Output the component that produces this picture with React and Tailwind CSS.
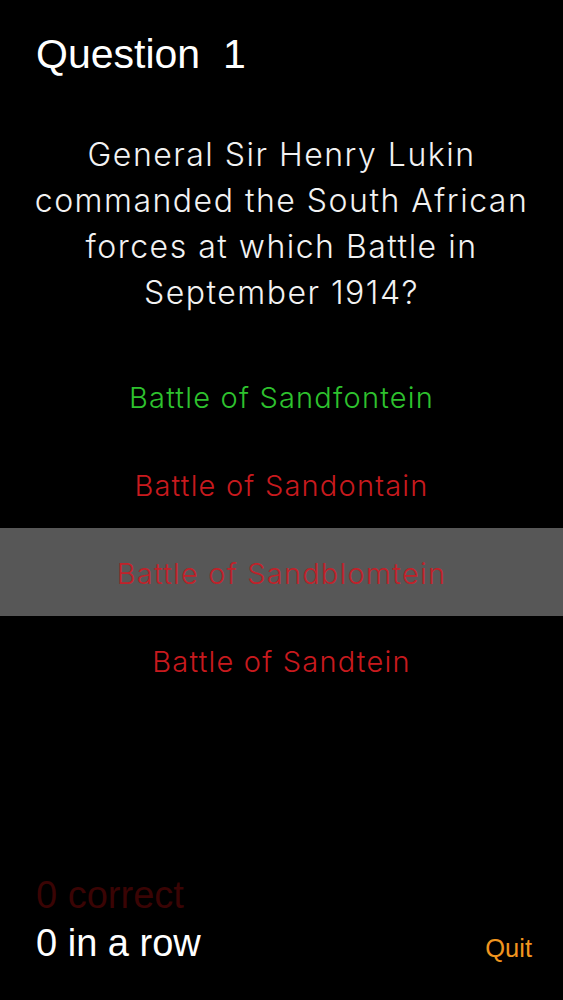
import React from "react";

const answers = [
  { text: "Battle of Sandfontein", cls: "text-[#2ec22e]", bg: "" },
  { text: "Battle of Sandontain", cls: "text-[#c81a1e]", bg: "" },
  { text: "Battle of Sandblomtein", cls: "text-[#c0222a]", bg: "bg-[#575757]" },
  { text: "Battle of Sandtein", cls: "text-[#c81a1e]", bg: "" },
];

export default function App() {
  return (
    <div className="flex h-[1000px] w-full flex-col bg-black text-white">
      <div className="flex h-[108px] items-center px-[36px]">
        <h1 className="whitespace-pre font-['Liberation_Sans',Arial,sans-serif] text-[41px] leading-none">
          Question  1
        </h1>
      </div>
      <p className="mx-auto mt-[24px] w-[520px] text-center font-['Inter',sans-serif] text-[32px] font-light leading-[46px] tracking-[1.5px] text-[#f2f2f2]">
        General Sir Henry Lukin commanded the South African forces at which Battle in September 1914?
      </p>
      <div className="mt-[36px] flex flex-col">
        {answers.map((a) => (
          <div
            key={a.text}
            className={`flex h-[88px] items-center justify-center pt-[4px] font-['Inter',sans-serif] text-[29px] font-light tracking-[1.2px] ${a.bg} ${a.cls}`}
          >
            {a.text}
          </div>
        ))}
      </div>
      <div className="mt-auto flex flex-col px-[36px] pb-[33px] font-['Liberation_Sans',Arial,sans-serif]">
        <div className="flex h-[48px] items-center text-[38px] text-[#3a0404]">0 correct</div>
        <div className="flex h-[48px] items-center justify-between">
          <span className="text-[38px] text-white">0 in a row</span>
          <span className="-mr-[5px] pt-[10px] text-[25.5px] text-[#f0951f]">Quit</span>
        </div>
      </div>
    </div>
  );
}
